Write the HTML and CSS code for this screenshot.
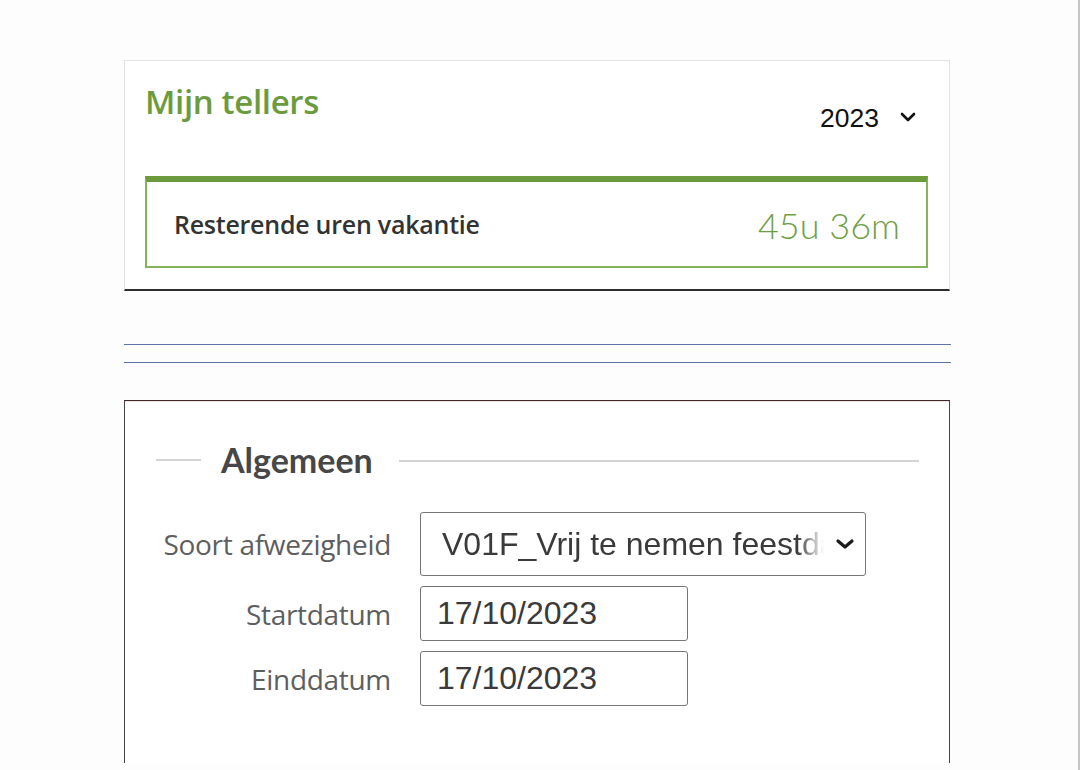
FILE: index.html
```html
<!DOCTYPE html>
<html lang="nl">
<head>
<meta charset="utf-8">
<title>Mijn tellers</title>
<link rel="stylesheet" href="styles.css">
</head>
<body>
<div class="page">
  <section class="card counters">
    <div class="card-head">
      <h1 class="title">Mijn tellers</h1>
      <div class="year-select">
        <span>2023</span>
        <svg class="chev-small" width="16" height="10" viewBox="0 0 16 10"><path d="M2 2 L8 8 L14 2" fill="none" stroke="#111" stroke-width="2.6" stroke-linecap="round" stroke-linejoin="round"/></svg>
      </div>
    </div>
    <div class="counter">
      <span class="counter-label">Resterende uren vakantie</span>
      <span class="counter-value">45u 36m</span>
    </div>
  </section>

  <div class="rules">
    <div class="rule"></div>
    <div class="rule"></div>
  </div>

  <section class="card form-card">
    <div class="legend">
      <span class="legend-line short"></span>
      <span class="legend-text">Algemeen</span>
      <span class="legend-line long"></span>
    </div>
    <div class="form-grid">
      <label class="form-label">Soort afwezigheid</label>
      <div class="control select-control">
        <span class="select-text">V01F_Vrij te nemen feestdag</span>
        <svg class="chev" width="20" height="12" viewBox="0 0 20 12"><path d="M3 3 L10 9 L17 3" fill="none" stroke="#1a1a1a" stroke-width="3.2" stroke-linecap="round" stroke-linejoin="round"/></svg>
      </div>
      <label class="form-label">Startdatum</label>
      <div class="control date-control">17/10/2023</div>
      <label class="form-label">Einddatum</label>
      <div class="control date-control">17/10/2023</div>
    </div>
  </section>
</div>
</body>
</html>
```
FILE: styles.css
```css
html, body {
  margin: 0;
  padding: 0;
  background: #ffffff;
}
.page {
  width: 1080px;
  height: 770px;
  border-right: 2px solid #c6c6c6;
  background: #fdfdfd;
  padding: 60px 0 0 124px;
  box-sizing: border-box;
  overflow: hidden;
}
.card {
  width: 826px;
  box-sizing: border-box;
  background: #ffffff;
}
.counters {
  border: 1px solid #e2e2e2;
  border-bottom: 2px solid #2e2e2e;
  padding: 21px 21px 21px 20px;
}
.card-head {
  display: flex;
  justify-content: space-between;
  align-items: flex-start;
}
.title {
  margin: 2px 0 0 0;
  font-family: "Open Sans", "Noto Sans", sans-serif;
  font-weight: 600;
  font-size: 33px;
  line-height: 36px;
  color: #6b9b3c;
  letter-spacing: -0.35px;
}
.year-select {
  margin-top: 21px;
  margin-right: 12px;
  display: flex;
  align-items: center;
  gap: 21px;
  font-family: "Liberation Sans", Arial, sans-serif;
  font-size: 26.5px;
  line-height: 30px;
  color: #111;
}
.chev-small {
  display: block;
  margin-top: -2px;
}
.counter {
  margin-top: 43px;
  height: 92px;
  box-sizing: border-box;
  border: 2px solid #84b35a;
  border-top: 6px solid #6b9b3c;
  display: flex;
  align-items: center;
  justify-content: space-between;
  padding: 0 26px 0 27px;
}
.counter-label {
  font-family: "Open Sans", "Noto Sans", sans-serif;
  font-weight: 600;
  font-size: 25px;
  color: #333333;
  letter-spacing: -0.25px;
}
.counter-value {
  font-family: Lato, "Noto Sans", sans-serif;
  font-weight: 300;
  font-size: 36px;
  color: #6f9f45;
  margin-top: 2px;
}
.rules {
  margin-top: 53px;
  width: 827px;
}
.rule {
  height: 1px;
  background: #5b76a6;
  margin-bottom: 17px;
}
.form-card {
  margin-top: 37px;
  height: 363px;
  border: 1px solid #444444;
  border-top-color: #3d2828;
  border-bottom: none;
  box-shadow: inset 0 1px 0 #f4e4e4;
  padding: 39px 30px 0 31px;
}
.legend {
  display: flex;
  align-items: center;
  height: 40px;
}
.legend-line {
  height: 2px;
  background: #d4d4d4;
}
.legend-line.short {
  width: 45px;
  margin-right: 20px;
}
.legend-line.long {
  flex: 1;
  margin-left: 26px;
  margin-top: 2px;
}
.legend-text {
  font-family: Lato, "Noto Sans", sans-serif;
  font-weight: 700;
  font-size: 34px;
  line-height: 40px;
  color: #474747;
}
.form-grid {
  margin-top: 32px;
  margin-left: -30px;
  display: grid;
  grid-template-columns: 265px auto;
  column-gap: 29px;
  row-gap: 10px;
  justify-content: start;
  align-items: center;
}
.form-label {
  text-align: right;
  font-family: "Open Sans", "Noto Sans", sans-serif;
  font-size: 28px;
  color: #5e5e5e;
  letter-spacing: -0.3px;
}
.control {
  box-sizing: border-box;
  border: 1px solid #767676;
  border-radius: 3px;
  background: #ffffff;
  font-family: "Liberation Sans", Arial, sans-serif;
  font-size: 32px;
  color: #3a3a3a;
  display: flex;
  align-items: center;
}
.select-control {
  width: 446px;
  height: 64px;
  padding: 0 10px 0 21px;
  justify-content: space-between;
}
.select-text {
  width: 382px;
  white-space: nowrap;
  overflow: hidden;
  -webkit-mask-image: linear-gradient(to right, #000 93%, transparent 100%);
  mask-image: linear-gradient(to right, #000 93%, transparent 100%);
}
.chev {
  display: block;
}
.date-control {
  width: 268px;
  height: 55px;
  padding: 0 0 0 16px;
}
```
